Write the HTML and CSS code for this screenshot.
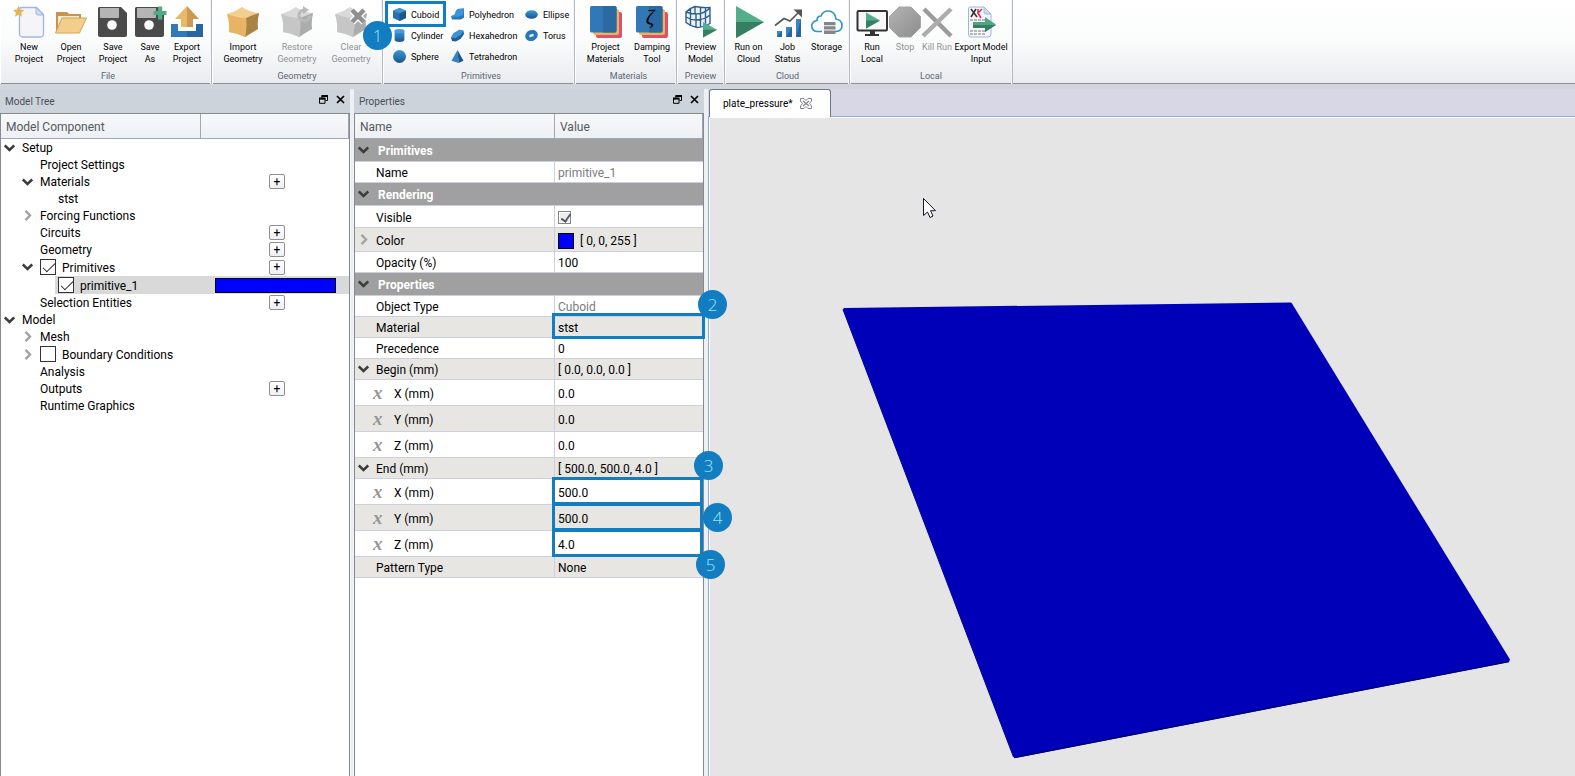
FILE: index.html
```html
<!DOCTYPE html>
<html lang="en">
<head>
<meta charset="utf-8">
<title>plate_pressure</title>
<link rel="stylesheet" href="styles.css">
</head>
<body>
<svg class="defs" aria-hidden="true">
  <defs>
    <linearGradient id="gBlue" x1="0" y1="0" x2="0" y2="1"><stop offset="0" stop-color="#3a9ae0"/><stop offset="1" stop-color="#1c5485"/></linearGradient>
    <linearGradient id="gGrey" x1="0" y1="0" x2="1" y2="1"><stop offset="0" stop-color="#b4b4b4"/><stop offset="1" stop-color="#8c8c8c"/></linearGradient>
    <symbol id="down" viewBox="0 0 11 8"><path d="M.8 1.500 5.500 6 10.200 1.500" fill="none" stroke="#3c3c3c" stroke-width="2.500"/></symbol>
    <symbol id="right" viewBox="0 0 8 11"><path d="M1.500.8 6 5.500 1.500 10.200" fill="none" stroke="#a3a3a3" stroke-width="2.400"/></symbol>
    <symbol id="float" viewBox="0 0 9 9"><path d="M3 3V.8h5.500v4.700H6.500M.5 3.800h5.500v4.500H.5z" fill="none" stroke="#000"/><path d="M2.500 1h6.500M0 3.500h6.500" stroke="#000" stroke-width="1.800"/></symbol>
    <symbol id="close" viewBox="0 0 9 9"><path d="M1 1l7 7M8 1 1 8" stroke="#000" stroke-width="1.700"/></symbol>
    <symbol id="floppy" viewBox="0 0 32 32"><path d="M2 1h22l6 6v22a2 2 0 0 1-2 2H3a2 2 0 0 1-2-2V2z" fill="#4a4a4a"/><path d="M3 2h19v9a1 1 0 0 1-1 1H4a1 1 0 0 1-1-1z" fill="#b4b4b4"/><circle cx="15" cy="19" r="4.800" fill="#fff"/></symbol>
    <symbol id="crate" viewBox="0 0 32 32"><path d="M0 8Q8 6 15 1q7 5 17 6-2 9-1 16-7 4-13 8-8-4-16-5 1-9-2-18z" fill="#d9d9d9"/><path d="M19 12q7-3 13-5-2 9-1 16-7 4-13 8 2-9 1-19z" fill="#acacac"/><path d="M0 8q10 4 19 4 1 10-1 19-8-4-16-5 1-9-2-18z" fill="#c6c6c6"/></symbol>
  </defs>
</svg>
<div class="app">
  <header class="ribbon">
    <section class="group file">
      <div class="tools">
        <button class="tool w42"><svg viewBox="0 0 32 32"><path d="M8 1.500h15.500l7 7V28a3 3 0 0 1-3 3h-18a3 3 0 0 1-3-3V3.500q0-2 2-2z" fill="#f5f5f7" stroke="#9db7de" stroke-width="1.300"/><path d="M23 1.500V7q0 2 2 2h5.500z" fill="#d0dcf0" stroke="#9db7de"/><path d="m5.500 0 1.700 3.500 4 .5-3 2.800.8 4-3.500-2L2 10.800l.8-4L0 4l3.800-.5z" fill="#e6b25c"/></svg><span>New<br>Project</span></button>
        <button class="tool w42"><svg viewBox="0 0 32 32"><path d="M1 6h10q2 0 3 2h12v5H8L1 26z" fill="#c8934a"/><path d="M3 10h21v4H8L3 24z" fill="#f0ead8"/><path d="M7 12h24.500l-7 15H.5z" fill="#f2cd8c" stroke="#d9a452"/></svg><span>Open<br>Project</span></button>
        <button class="tool w42"><svg><use href="#floppy"/></svg><span>Save<br>Project</span></button>
        <button class="tool w32"><svg viewBox="0 0 32 32"><use href="#floppy" width="32" height="32"/><path d="M24 .5h4.200V5h4.300v4h-4.300v4.500H24V9h-4.500V5H24z" fill="#4fab85"/></svg><span>Save<br>As</span></button>
        <button class="tool w42"><svg viewBox="0 0 32 32"><path d="M0 18h7v7h18v-7h7v13H0z" fill="#3179b9"/><path d="M16 25h9v-7h7v13H16z" fill="#28669f"/><path d="M16 0v21H10v-8H4z" fill="#e9b869"/><path d="M16 0v21h6v-8h6z" fill="#c99a52"/></svg><span>Export<br>Project</span></button>
      </div>
      <h2>File</h2>
    </section>
    <section class="group geometry">
      <div class="tools">
        <button class="tool w54"><svg viewBox="0 0 32 32"><path d="M0 8Q8 6 15 1q7 5 17 6-2 9-1 16-7 4-13 8-8-4-16-5 1-9-2-18z" fill="#f3ce91"/><path d="M19 12q7-3 13-5-2 9-1 16-7 4-13 8 2-9 1-19z" fill="#a88246"/><path d="M0 8q10 4 19 4 1 10-1 19-8-4-16-5 1-9-2-18z" fill="#e6b462"/></svg><span>Import<br>Geometry</span></button>
        <button class="tool w54" disabled><svg viewBox="0 0 32 32"><use href="#crate" width="32" height="32"/><path d="M23 4a5.500 5.500 0 1 0 6 6" fill="none" stroke="#b9b9b9" stroke-width="3"/><path d="m22 0 6 4-6 4z" fill="#b9b9b9"/></svg><span>Restore<br>Geometry</span></button>
        <button class="tool w54" disabled><svg viewBox="0 0 32 32"><use href="#crate" width="32" height="32"/><path d="m17 4 12 12m0-12L17 16" stroke="#fff" stroke-width="7"/><path d="m17 4 12 12m0-12L17 16" stroke="#8f8f8f" stroke-width="4.500"/></svg><span>Clear<br>Geometry</span></button>
      </div>
      <h2>Geometry</h2>
    </section>
    <section class="group primitives">
      <div class="shapes">
        <button class="shape marked"><svg viewBox="0 0 12 12"><path d="M0 2.500 6 0l6 2.500v6.800L6 12 0 9.300z" fill="#2a70ad"/><path d="M0 2.500 6 0l6 2.500L6 5z" fill="#3e93d6"/><path d="M6 5l6-2.500v6.800L6 12z" fill="#1f5688"/></svg>Cuboid</button>
        <button class="shape"><svg viewBox="0 0 12 12"><path d="M4.500 3 6 1l6-.5V9L9 10.500H1L0 7.500l3.500-1.500z" fill="#2b76b6"/><path d="M4.500 3 6 1l6-.5-1 6-4 1.500H0l3.500-2z" fill="#3b94dc"/></svg>Polyhedron</button>
        <button class="shape"><svg viewBox="0 0 12 12"><ellipse cx="6" cy="6" rx="5.800" ry="4" fill="url(#gBlue)"/></svg>Ellipse</button>
        <button class="shape"><svg viewBox="0 0 12 12"><path d="M1.500 1.800v8.400c0 2.400 9 2.400 9 0V1.800z" fill="url(#gBlue)"/><ellipse cx="6" cy="1.900" rx="4.500" ry="1.800" fill="#459bdf"/></svg>Cylinder</button>
        <button class="shape"><svg viewBox="0 0 12 12"><path d="M0 8 2.500 4 8 .8l3.500.7.500 3L9 9l-4.500 2.500L1 11z" fill="#235f95"/><path d="M0 8 2.500 4 8 .8l3.500.7L9.500 5 4 8.500z" fill="#3b94dc"/></svg>Hexahedron</button>
        <button class="shape"><svg viewBox="0 0 12 12"><ellipse cx="6" cy="6" rx="4.100" ry="3.200" fill="#d9e6f2" stroke="#2877bb" stroke-width="3.600" transform="rotate(-25 6 6)"/></svg>Torus</button>
        <button class="shape"><svg viewBox="0 0 12 12"><circle cx="6" cy="6" r="6" fill="url(#gBlue)"/></svg>Sphere</button>
        <button class="shape"><svg viewBox="0 0 12 12"><path d="M6 0 .5 10 7 12z" fill="#3083c4"/><path d="m6 0 5.500 10L7 12z" fill="#1f5688"/></svg>Tetrahedron</button>
      </div>
      <h2>Primitives</h2>
    </section>
    <section class="group materials">
      <div class="tools">
        <button class="tool w47"><svg viewBox="0 0 32 32"><rect x="6" y="6" width="26" height="26" rx="2" fill="#d8536b"/><rect x="3" y="3" width="26" height="26" rx="2" fill="#ecb35c"/><rect width="26.500" height="26.500" rx="1.500" fill="#3378b6"/><path d="M13 0h12l1.500 1.500V25L25 26.500H13z" fill="#2b69a2"/></svg><span>Project<br>Materials</span></button>
        <button class="tool w46"><svg viewBox="0 0 32 32"><rect x="6" y="6" width="26" height="26" rx="2" fill="#d8536b"/><rect x="3" y="3" width="26" height="26" rx="2" fill="#ecb35c"/><rect width="26.500" height="26.500" rx="1.500" fill="#3378b6"/><path d="M13 0h12l1.500 1.500V25L25 26.500H13z" fill="#2b69a2"/><text class="zeta" x="14" y="18" text-anchor="middle">ζ</text></svg><span>Damping<br>Tool</span></button>
      </div>
      <h2>Materials</h2>
    </section>
    <section class="group preview">
      <div class="tools">
        <button class="tool w47"><svg viewBox="0 0 32 32"><path d="M1 6q4-4 9-5.500 7 1.500 15 1v16q-7 4-13 4-6-1-11-5z" fill="#eef3f8"/><path d="M1 6q4-4 9-5.500 7 1.500 15 1v16q-7 4-13 4-6-1-11-5zM1 6q5 2 10 2 8 0 14-6M11 8v13.500M1 11q5 3 10 3 8 0 14-5M5.500 3v16M15.500 1.500V21M20.500 2v17.500M10 .5V8" fill="none" stroke="#2d5f8e" stroke-width="1.400"/><path d="M18 16v15.500l14-7.750z" fill="#55ae8a"/><path d="M18 23.700v7.800l14-7.750z" fill="#377f62"/></svg><span>Preview<br>Model</span></button>
      </div>
      <h2>Preview</h2>
    </section>
    <section class="group cloud">
      <div class="tools">
        <button class="tool w39"><svg viewBox="0 0 32 32"><path d="M3 0v32l28-16z" fill="#55ae8a"/><path d="M3 16v16l28-16z" fill="#377f62"/></svg><span>Run on<br>Cloud</span></button>
        <button class="tool w39"><svg viewBox="0 0 32 32"><path d="M5 25h5v6H5zM14 21h6v10h-6zM24 13h5v18h-5z" fill="#3d84c2"/><path d="m10 25-5 6h5zM20 21l-6 10h6zM29 13l-5 18h5z" fill="#2a649a"/><path d="m3 19.500 9-7 6 2.500L28 5" fill="none" stroke="#555" stroke-width="1.600"/><path d="M21.500 3.500H30v8z" fill="#555"/></svg><span>Job<br>Status</span></button>
        <button class="tool w39"><svg viewBox="0 0 32 32"><path d="M11 25.500H6.500a5.500 5.500 0 0 1-.5-11Q6 10 10 10q2-5 7-5 7 0 8 8 6 1 6 6.500t-6 6h-1" fill="none" stroke="#2f94cf" stroke-width="1.700"/><path d="M13 16h11.500v3.200H13zm0 4.300h11.500v3.200H13zm0 4.300h11.500v3.400H13z" fill="#84868a"/></svg><span>Storage</span></button>
      </div>
      <h2>Cloud</h2>
    </section>
    <section class="group local">
      <div class="tools">
        <button class="tool w36"><svg viewBox="0 0 32 32"><rect x="1.500" y="5" width="29.500" height="19.500" rx="1" fill="#f8f8f8" stroke="#333" stroke-width="2"/><path d="M14 25h5v3h4v2H9v-2h5z" fill="#333"/><path d="M10 6.500v16l14-8z" fill="#55ae8a"/><path d="M10 14.500v8l14-8z" fill="#377f62"/></svg><span>Run<br>Local</span></button>
        <button class="tool w30" disabled><svg viewBox="0 0 32 32"><path d="M10 1h12l9.500 9.500v11L22 31H10L.5 21.500v-11z" fill="url(#gGrey)" stroke="#a5a5a5"/></svg><span>Stop</span></button>
        <button class="tool w34" disabled><svg viewBox="0 0 32 32"><path d="m3 3 27 27" stroke="#9b9b9b" stroke-width="4.500"/><path d="M30 3 2 30" stroke="#adadad" stroke-width="4.500"/></svg><span>Kill Run</span></button>
        <button class="tool w54"><svg viewBox="0 0 32 32"><path d="M5 1h14l7 7v20q0 3-3 3H6q-2.500 0-2.500-3V3Q3.500 1 5 1z" fill="#f7f7fa" stroke="#9db7de"/><path d="M19 1v5q0 2 2 2h5z" fill="#d0dcf0" stroke="#9db7de"/><path d="m6 3 6 8m-1-8-5 8" stroke="#333" stroke-width="1.600"/><path d="m17 3-4 4 3 5M13 3v4" fill="none" stroke="#d8305a" stroke-width="1.600"/><path d="M5 14h16M5 25h16M5 28h16" stroke="#777" stroke-dasharray="3 1"/><path d="M8 16h12v-5l11 7.500L20 26v-4H8z" fill="#4ea783"/><path d="M8 19h23l-11 7v-4H8z" fill="#377f62"/></svg><span>Export Model<br>Input</span></button>
      </div>
      <h2>Local</h2>
    </section>
  </header>

  <main class="workspace">
    <section class="dock tree-dock">
      <div class="dock-title"><h1>Model Tree</h1><button aria-label="Float model tree"><svg><use href="#float"/></svg></button><button aria-label="Close model tree"><svg><use href="#close"/></svg></button></div>
      <div class="dock-body">
        <div class="tree-head"><span>Model Component</span><span></span></div>
        <ul class="tree">
          <li class="node"><button class="toggle" aria-label="Collapse Setup"><svg class="down"><use href="#down"/></svg></button><span class="name">Setup</span></li>
          <li class="node l1"><i class="toggle"></i><span class="name">Project Settings</span></li>
          <li class="node l1"><button class="toggle" aria-label="Collapse Materials"><svg class="down"><use href="#down"/></svg></button><span class="name">Materials</span><span class="side"><button class="add" aria-label="Add material">+</button></span></li>
          <li class="node l2"><i class="toggle"></i><span class="name">stst</span></li>
          <li class="node l1"><button class="toggle" aria-label="Expand Forcing Functions"><svg class="right"><use href="#right"/></svg></button><span class="name">Forcing Functions</span></li>
          <li class="node l1"><i class="toggle"></i><span class="name">Circuits</span><span class="side"><button class="add" aria-label="Add circuit">+</button></span></li>
          <li class="node l1"><i class="toggle"></i><span class="name">Geometry</span><span class="side"><button class="add" aria-label="Add geometry">+</button></span></li>
          <li class="node l1 tall"><button class="toggle" aria-label="Collapse Primitives"><svg class="down"><use href="#down"/></svg></button><input type="checkbox" id="c1" checked><label class="name" for="c1">Primitives</label><span class="side"><button class="add" aria-label="Add primitive">+</button></span></li>
          <li class="node l2 tall selected"><i class="toggle"></i><input type="checkbox" id="c2" checked><label class="name" for="c2">primitive_1</label><span class="side"><i class="color-bar"></i></span></li>
          <li class="node l1"><i class="toggle"></i><span class="name">Selection Entities</span><span class="side"><button class="add" aria-label="Add selection entity">+</button></span></li>
          <li class="node"><button class="toggle" aria-label="Collapse Model"><svg class="down"><use href="#down"/></svg></button><span class="name">Model</span></li>
          <li class="node l1"><button class="toggle" aria-label="Expand Mesh"><svg class="right"><use href="#right"/></svg></button><span class="name">Mesh</span></li>
          <li class="node l1 tall"><button class="toggle" aria-label="Expand Boundary Conditions"><svg class="right"><use href="#right"/></svg></button><input type="checkbox" id="c3"><label class="name" for="c3">Boundary Conditions</label></li>
          <li class="node l1"><i class="toggle"></i><span class="name">Analysis</span></li>
          <li class="node l1"><i class="toggle"></i><span class="name">Outputs</span><span class="side"><button class="add" aria-label="Add output">+</button></span></li>
          <li class="node l1"><i class="toggle"></i><span class="name">Runtime Graphics</span></li>
        </ul>
      </div>
    </section>

    <section class="dock props-dock">
      <div class="dock-title"><h1>Properties</h1><button aria-label="Float properties"><svg><use href="#float"/></svg></button><button aria-label="Close properties"><svg><use href="#close"/></svg></button></div>
      <div class="dock-body">
        <table class="props">
          <colgroup><col class="col-name"><col></colgroup>
          <thead><tr><th>Name</th><th>Value</th></tr></thead>
          <tbody>
            <tr class="section"><th colspan="2"><svg class="down"><use href="#down"/></svg>Primitives</th></tr>
            <tr><td><label for="p1">Name</label></td><td><input id="p1" value="primitive_1" disabled></td></tr>
            <tr class="section"><th colspan="2"><svg class="down"><use href="#down"/></svg>Rendering</th></tr>
            <tr class="h22"><td><label for="p2">Visible</label></td><td><input id="p2" type="checkbox" class="small-check" checked></td></tr>
            <tr class="h24 alt"><td><svg class="right"><use href="#right"/></svg>Color</td><td><div class="color-value"><i class="swatch"></i>[ 0, 0, 255 ]</div></td></tr>
            <tr><td><label for="p3">Opacity (%)</label></td><td><input id="p3" value="100"></td></tr>
            <tr class="section"><th colspan="2"><svg class="down"><use href="#down"/></svg>Properties</th></tr>
            <tr><td><label for="p4">Object Type</label></td><td><input id="p4" value="Cuboid" disabled></td></tr>
            <tr class="alt"><td><label for="p5">Material</label></td><td class="framed wide"><input id="p5" value="stst"></td></tr>
            <tr><td><label for="p6">Precedence</label></td><td><input id="p6" value="0"></td></tr>
            <tr class="alt"><td><svg class="down"><use href="#down"/></svg>Begin (mm)</td><td>[ 0.0, 0.0, 0.0 ]</td></tr>
            <tr class="sub"><td><i class="var">x</i><label for="b1">X (mm)</label></td><td><input id="b1" value="0.0"></td></tr>
            <tr class="sub alt"><td><i class="var">x</i><label for="b2">Y (mm)</label></td><td><input id="b2" value="0.0"></td></tr>
            <tr class="sub"><td><i class="var">x</i><label for="b3">Z (mm)</label></td><td><input id="b3" value="0.0"></td></tr>
            <tr class="alt"><td><svg class="down"><use href="#down"/></svg>End (mm)</td><td>[ 500.0, 500.0, 4.0 ]</td></tr>
            <tr class="sub"><td><i class="var">x</i><label for="e1">X (mm)</label></td><td class="framed"><input id="e1" value="500.0"></td></tr>
            <tr class="sub alt"><td><i class="var">x</i><label for="e2">Y (mm)</label></td><td class="framed"><input id="e2" value="500.0"></td></tr>
            <tr class="sub"><td><i class="var">x</i><label for="e3">Z (mm)</label></td><td class="framed"><input id="e3" value="4.0"></td></tr>
            <tr class="alt"><td><label for="p7">Pattern Type</label></td><td><input id="p7" value="None"></td></tr>
          </tbody>
        </table>
      </div>
    </section>

    <section class="view">
      <div class="tabs"><div class="tab"><span>plate_pressure*</span><button aria-label="Close tab"><svg viewBox="0 0 12 11"><path d="M.5.5h3.500l2 2 2-2h3.500v2.500l-2 2.500 2 2.500v2.500H8l-2-2-2 2H.5V8l2-2.500-2-2.500z" fill="#fff" stroke="#85858e"/><path d="m3 3 6 5M9 3 3 8" stroke="#85858e" stroke-width="1.300"/></svg></button></div></div>
      <div class="canvas">
        <svg class="scene">
          <path d="M134 192.500 135 191 582 185.500 583 186.500 801 542.500 800 545 306 641 304.500 640z" fill="#0000b8"/>
          <path d="M305 640.500 800 544.500" stroke="#00007c" stroke-width="1.500"/>
          <path d="M134 192.500 304.500 640" stroke="#00009a"/>
          <path d="M214.500 81.500v17l4-3.500 2.500 5.500 3-1.500-2.500-5.300h5z" fill="#fff" stroke="#15152a"/>
        </svg>
      </div>
    </section>
  </main>

  <span class="callout n1">1</span>
  <span class="callout n2">2</span>
  <span class="callout n3">3</span>
  <span class="callout n4">4</span>
  <span class="callout n5">5</span>
</div>
</body>
</html>
```
FILE: styles.css
```css
* { box-sizing: border-box; }
html, body { height: 100%; }
body { margin: 0; font: 12px/16px Roboto, "Open Sans", sans-serif; color: #000; background: #eef0f4; overflow: hidden; }
button, input { font: inherit; color: inherit; margin: 0; padding: 0; border: 0; background: none; }
h1, h2 { margin: 0; font-weight: 400; }
ul { margin: 0; padding: 0; list-style: none; }
.defs { position: absolute; width: 0; height: 0; }
.app { position: relative; display: flex; flex-direction: column; min-height: 100vh; }

/* Ribbon */
.ribbon { display: flex; height: 89px; border-bottom: 5px solid #d3d5dc; background: linear-gradient(#fff, #fafbfb 50%, #e9ebee); box-shadow: inset 0 -1px #8b8f9a; font-size: 9px; line-height: 12px; }
.group { display: flex; flex-direction: column; justify-content: space-between; padding: 6px 4px 2px; border-right: 1px solid #b3b8c0; box-shadow: inset 1px 0 #fff, inset -1px 0 #f4f5f7; }
.group h2 { font-size: 9px; text-align: center; color: #5b6678; }
.file { padding-right: 3px; padding-left: 8px; }
.primitives { padding-left: 9px; }
.materials { padding-right: 1px; padding-left: 7px; }
.preview { padding-right: 0; padding-left: 0; }
.cloud { padding-right: 3px; }
.tools { display: flex; align-items: flex-start; }
.tool { display: flex; flex-direction: column; align-items: center; gap: 3px; white-space: nowrap; }
.tool svg { width: 32px; height: 32px; flex: none; overflow: visible; }
.tool:disabled { color: #8f9296; }
.w30 { width: 30px; } .w32 { width: 32px; } .w34 { width: 34px; } .w36 { width: 36px; } .w39 { width: 39px; }
.w42 { width: 42px; } .w46 { width: 46px; } .w47 { width: 47px; } .w54 { width: 54px; }
.zeta { font: italic 21px "Liberation Serif", serif; }
.shapes { display: grid; grid-template-columns: 58px 74px 46px; grid-auto-rows: 21px; margin-top: -2px; }
.shape { position: relative; display: flex; align-items: center; gap: 5px; padding-left: 1px; }
.shape svg { width: 13px; height: 13px; }
.marked::after { content: ""; position: absolute; inset: -3px 4px -2px -7px; border: 3px solid #127dc0; }

/* Docks */
.workspace { display: flex; flex: 1; }
.dock { display: flex; flex-direction: column; flex: none; }
.tree-dock { width: 350px; margin-right: 4px; }
.props-dock { width: 350px; margin-right: 4px; }
.dock-title { display: flex; align-items: center; gap: 8px; height: 24px; padding: 2px 5px 0; background: #cdd3db; font-size: 10px; color: #4a4f57; }
.dock-title h1 { flex: 1; font-size: 10px; }
.dock-title button { display: flex; padding-bottom: 5px; }
.dock-title svg { width: 9px; height: 9px; }
.dock-body { flex: 1; background: #fff; border: 1px solid #848a92; border-bottom: 0; }
.down { width: 11px; height: 8px; }
.right { width: 8px; height: 11px; }

.tree-head { display: grid; grid-template-columns: 200px 1fr; height: 25px; background: linear-gradient(#f7f8fa, #edf0f4); border-bottom: 1px solid #a0a8b3; color: #545960; line-height: 26px; }
.tree-head span { height: 24px; padding-left: 5px; border-right: 1px solid #a0a8b3; }
.node { display: flex; align-items: center; height: 17px; padding-left: 1px; }
.tall { height: 18px; }
.l1 { padding-left: 19px; }
.l2 { padding-left: 37px; }
.selected { background: linear-gradient(to right, transparent 54px, #d9d9d9 54px); }
.toggle { display: flex; flex: none; width: 20px; padding-left: 2px; }
.toggle .right { margin-left: 2px; }
.name { flex: 1; white-space: nowrap; }
.tall .name { padding-top: 2px; }
.side { display: flex; justify-content: center; width: 148px; }
.node input { appearance: none; position: relative; flex: none; width: 16px; height: 16px; margin-right: 6px; border: 1px solid #333; background: #fff; }
.node input:checked::after { content: ""; position: absolute; left: 5px; top: 0; width: 5px; height: 11px; border: solid #222; border-width: 0 1px 1px 0; transform: rotate(45deg); }
.add { width: 16px; height: 15px; margin-left: 4px; border: 1px solid #8e8f93; border-radius: 2px; background: linear-gradient(#fff, #f0f0f3); line-height: 12px; text-align: center; }
.color-bar { width: 121px; height: 15px; border: 1px solid #000; background: #00f; }

/* Property grid */
.props { width: 100%; border-collapse: separate; border-spacing: 0; table-layout: fixed; }
.col-name { width: 200px; }
.props th, .props td { position: relative; height: 21px; padding: 2px 0 0 21px; border-bottom: 1px solid #cdd0dc; text-align: left; font-weight: 400; line-height: 16px; }
.props td:first-child { border-right: 1px solid #cdd0dc; }
.props td + td { padding-left: 3px; }
.props thead th { height: 25px; padding-left: 5px; border-bottom-color: #a0a8b3; border-right: 1px solid #a0a8b3; background: linear-gradient(#f7f8fa, #edf0f4); color: #545960; }
.props .section th { height: 23px; padding-left: 23px; background: #a0a0a0; color: #fff; font-weight: 700; }
.props .h22 td { height: 22px; }
.props .h24 td { height: 24px; }
.props .sub td { height: 26px; }
.props .sub td:first-child { padding-left: 39px; }
.alt { background: #e8e6e3; }
.props svg { position: absolute; left: 3px; top: 0; bottom: 0; margin: auto 0; }
.props .right { left: 5px; }
.props input { display: block; width: 100%; height: 16px; }
.props input:disabled { color: #7c7c7c; }
.var { position: absolute; left: 18px; font: italic 700 19px/14px "Liberation Serif", serif; color: #969696; }
.props .small-check { appearance: none; width: 13px; height: 13px; border: 1px solid #7f858c; background: #eceded; box-shadow: inset 0 0 0 1px #fff; position: relative; }
.small-check:checked::after { content: ""; position: absolute; left: 4px; top: 0; width: 4px; height: 8px; border: solid #555b66; border-width: 0 2px 2px 0; transform: rotate(35deg); }
.color-value { display: flex; align-items: center; gap: 6px; }
.swatch { width: 16px; height: 16px; border: 1px solid #000; background: #00f; }
.framed::after { content: ""; position: absolute; z-index: 2; inset: -2px 0 -1px -3px; border: 3px solid #127dc0; pointer-events: none; }
.wide::after { inset: -4px -2px -2px -3px; }

/* Document area */
.view { display: flex; flex: 1; flex-direction: column; min-width: 0; }
.tabs { display: flex; height: 28px; background: #d8d7e5; border-bottom: 1px solid #8aaee0; }
.tab { display: flex; align-items: center; gap: 7px; height: 28px; margin-left: 1px; padding: 0 18px 0 13px; border: 1px solid #6d7886; border-bottom: 0; border-radius: 3px 3px 0 0; background: #fff; font-size: 10px; }
.tab button { display: flex; padding-bottom: 1px; }
.tab svg { width: 12px; height: 11px; }
.canvas { position: relative; flex: 1; border-left: 1px solid #8aaee0; background: #e5e5e5; box-shadow: inset 1px 1px #fff; }
.scene { position: absolute; inset: 0; width: 100%; height: 100%; }

/* Numbered callouts */
.callout { position: absolute; z-index: 3; width: 29px; height: 29px; border-radius: 50%; background: #127dc0; color: #a0e4ff; font: 300 17px/29px "Open Sans", sans-serif; text-align: center; }
.n1 { left: 363px; top: 21px; }
.n2 { left: 698px; top: 290px; }
.n3 { left: 694px; top: 451px; }
.n4 { left: 703px; top: 503px; }
.n5 { left: 696px; top: 550px; }
```
